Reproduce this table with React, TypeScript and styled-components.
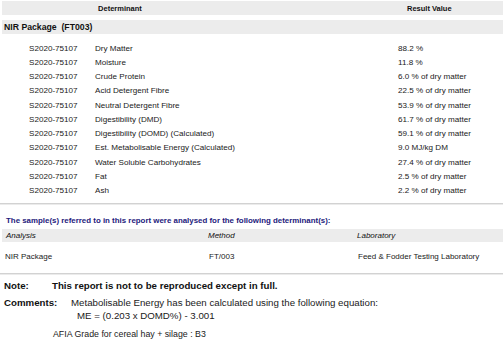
import React from "react";
import styled, { createGlobalStyle } from "styled-components";

const Global = createGlobalStyle`
  html, body { margin: 0; padding: 0; background: #ffffff; }
  body { font-family: "Liberation Sans", Arial, Helvetica, sans-serif; color: #111111; }
`;

const Page = styled.div`
  width: 503px;
  height: 347px;
  overflow: hidden;
  padding-top: 1px;
  box-sizing: border-box;
`;

const HeadBand = styled.div`
  margin-left: 2px;
  height: 14px;
  background: #ececec;
  display: grid;
  grid-template-columns: 236px 1fr;
  align-items: center;
  font-weight: bold;
  font-size: 7.5px;
`;

const HeadCell = styled.div<{ $pad?: number; $center?: boolean }>`
  text-align: ${(p) => (p.$center ? "center" : "left")};
  padding-left: ${(p) => p.$pad ?? 0}px;
`;

const GroupBand = styled.div`
  margin: 5px 0 0 2px;
  height: 14px;
  background: #ececec;
  display: flex;
  align-items: center;
  padding-left: 2px;
  font-weight: bold;
  font-size: 8.7px;
  white-space: pre;
`;

const Rows = styled.div`
  margin-top: 7px;
  display: flex;
  flex-direction: column;
`;

const DataRow = styled.div`
  height: 14.25px;
  display: grid;
  grid-template-columns: 95px 303px 1fr;
  align-items: center;
  font-size: 8.1px;
  color: #1a1a1a;
`;

const SampleId = styled.div`
  padding-left: 29px;
`;

const Rule = styled.div<{ $top: number }>`
  margin-top: ${(p) => p.$top}px;
  height: 1px;
  border-top: 1px solid #d2d2d2;
  background: #ebebeb;
`;

const Notice = styled.div`
  margin: 11px 0 0 6px;
  font-size: 7.9px;
  font-weight: bold;
  color: #1d1a7c;
`;

const AnalysisHead = styled.div`
  margin: 4px 0 0 2px;
  height: 13px;
  background: #ececec;
  display: grid;
  grid-template-columns: 202px 149px 1fr;
  align-items: center;
  font-style: italic;
  font-size: 8px;
  padding-left: 4px;
`;

const AnalysisRow = styled.div`
  margin-top: 8px;
  height: 14px;
  display: grid;
  grid-template-columns: 204px 149px 1fr;
  align-items: center;
  font-size: 8px;
  padding-left: 5px;
  color: #1a1a1a;
`;

const NoteRow = styled.div<{ $top: number; $indent: number }>`
  margin-top: ${(p) => p.$top}px;
  display: grid;
  grid-template-columns: ${(p) => p.$indent}px 1fr;
  align-items: center;
  padding-left: 4px;
  font-size: 9.7px;
  line-height: 12px;
`;

const Label = styled.div`
  font-weight: bold;
`;

const Bold = styled.div`
  font-weight: bold;
`;

const Plain = styled.div`
  color: #1a1a1a;
`;

const Equation = styled.div`
  padding-left: 77px;
  margin-top: 1px;
  font-size: 9.7px;
  line-height: 12px;
  color: #1a1a1a;
`;

const Grade = styled.div`
  padding-left: 53px;
  margin-top: 7px;
  font-size: 8.8px;
  line-height: 11px;
  color: #1a1a1a;
`;

const rows: [string, string][] = [
  ["Dry Matter", "88.2 %"],
  ["Moisture", "11.8 %"],
  ["Crude Protein", "6.0 % of dry matter"],
  ["Acid Detergent Fibre", "22.5 % of dry matter"],
  ["Neutral Detergent Fibre", "53.9 % of dry matter"],
  ["Digestibility (DMD)", "61.7 % of dry matter"],
  ["Digestibility (DOMD) (Calculated)", "59.1 % of dry matter"],
  ["Est. Metabolisable Energy (Calculated)", "9.0 MJ/kg DM"],
  ["Water Soluble Carbohydrates", "27.4 % of dry matter"],
  ["Fat", "2.5 % of dry matter"],
  ["Ash", "2.2 % of dry matter"],
];

export default function App() {
  return (
    <>
      <Global />
      <Page>
        <HeadBand>
          <HeadCell $center>Determinant</HeadCell>
          <HeadCell $pad={169}>Result Value</HeadCell>
        </HeadBand>
        <GroupBand>{"NIR Package  (FT003)"}</GroupBand>
        <Rows>
          {rows.map(([d, v]) => (
            <DataRow key={d}>
              <SampleId>S2020-75107</SampleId>
              <div>{d}</div>
              <div>{v}</div>
            </DataRow>
          ))}
        </Rows>
        <Rule $top={5} />
        <Notice>
          The sample(s) referred to in this report were analysed for the following determinant(s):
        </Notice>
        <AnalysisHead>
          <div>Analysis</div>
          <div>Method</div>
          <div>Laboratory</div>
        </AnalysisHead>
        <AnalysisRow>
          <div>NIR Package</div>
          <div>FT/003</div>
          <div>Feed &amp; Fodder Testing Laboratory</div>
        </AnalysisRow>
        <Rule $top={9} />
        <NoteRow $top={5} $indent={48}>
          <Label>Note:</Label>
          <Bold>This report is not to be reproduced except in full.</Bold>
        </NoteRow>
        <NoteRow $top={5} $indent={67}>
          <Label>Comments:</Label>
          <Plain>Metabolisable Energy has been calculated using the following equation:</Plain>
        </NoteRow>
        <Equation>ME = (0.203 x DOMD%) - 3.001</Equation>
        <Grade>AFIA Grade for cereal hay + silage : B3</Grade>
      </Page>
    </>
  );
}
